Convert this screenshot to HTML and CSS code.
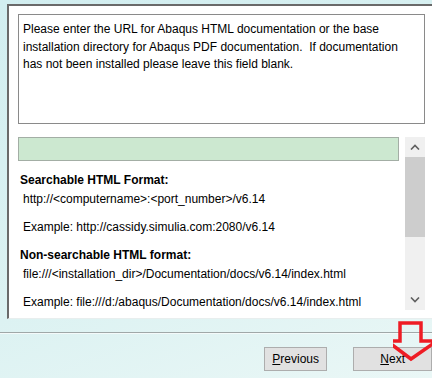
FILE: index.html
```html
<!DOCTYPE html>
<html lang="en">
<head>
<meta charset="UTF-8" />
<title>Abaqus Documentation Location</title>
<link rel="stylesheet" href="styles.css">
</head>
<body>
  <div class="panel">
    <!-- instructions box -->
    <div class="info-box">
      Please enter the URL for Abaqus HTML documentation or the base<br>
      installation directory for Abaqus PDF documentation.&nbsp; If documentation<br>
      has not been installed please leave this field blank.
    </div>

    <div class="scroll-area">
      <div class="scroll-content">
        <div class="url-field"></div>
        <div class="heading">Searchable HTML Format:</div>
        <div class="line">http://&lt;computername&gt;:&lt;port_number&gt;/v6.14</div>
        <div class="line example">Example: http://cassidy.simulia.com:2080/v6.14</div>
        <div class="heading">Non-searchable HTML format:</div>
        <div class="line">file:///&lt;installation_dir&gt;/Documentation/docs/v6.14/index.html</div>
        <div class="line example">Example: file:///d:/abaqus/Documentation/docs/v6.14/index.html</div>
      </div>
      <div class="scrollbar">
        <div class="sb-btn">
          <svg width="10" height="6" viewBox="0 0 10 6"><path d="M1 5.5 L5 1.5 L9 5.5" fill="none" stroke="#606060" stroke-width="1.6"/></svg>
        </div>
        <div class="sb-thumb"></div>
        <div class="sb-track"></div>
        <div class="sb-btn">
          <svg width="10" height="6" viewBox="0 0 10 6"><path d="M1 0.5 L5 4.5 L9 0.5" fill="none" stroke="#606060" stroke-width="1.6"/></svg>
        </div>
      </div>
    </div>
  </div>

  <div class="separator"></div>

  <div class="buttons">
    <div class="btn btn-prev"><u>P</u>revious</div>
    <div class="btn btn-next"><u>N</u>ext</div>
  </div>

  <!-- annotation arrow drawn over the Next button -->
  <svg class="red-arrow" width="48" height="42" viewBox="0 0 48 42">
    <polygon points="7,2 28,2 28,20 44,20 18,38 -6,20 7,20" fill="none" stroke="#ee1c24" stroke-width="3.5" stroke-linejoin="miter"/>
  </svg>
</body>
</html>
```

FILE: styles.css
```css
body {
  margin: 0;
  width: 432px;
  height: 378px;
  overflow: hidden;
  position: relative;
  font-family: "Liberation Sans", Arial, sans-serif;
  font-size: 12px;
  color: #000;
  background: linear-gradient(160deg, #d2eef0 0%, #dcf2f2 60%, #eaf7f6 100%);
}

.panel {
  margin: 4px 0 0 7px;
  width: 440px;
  height: 315px;
  box-sizing: border-box;
  background: #fff;
  border-top: 2px solid #6a6a6a;
  border-left: 2px solid #6a6a6a;
  border-bottom: 1px solid #e8eeee;
  padding: 8px 0 0 9px;
}

.info-box {
  width: 407px;
  height: 110px;
  box-sizing: border-box;
  border: 1px solid #8a8a8a;
  padding: 6px 0 0 4px;
  line-height: 17.5px;
}

.scroll-area {
  display: flex;
  gap: 6px;
  width: 407px;
  margin-top: 13px;
  height: 173px;
}

.scroll-content {
  width: 381px;
}

.url-field {
  height: 24px;
  box-sizing: border-box;
  background: #cce8d0;
  border: 1px solid #a3aea5;
}

.heading {
  font-weight: bold;
  line-height: 18px;
  margin-top: 10px;
  padding-left: 2px;
}

.line {
  line-height: 18px;
  padding-left: 5px;
  margin-top: 1px;
}

.line.example {
  margin-top: 10px;
}

.scrollbar {
  width: 20px;
  display: flex;
  flex-direction: column;
  background: #f0f0f0;
}

.sb-btn {
  height: 20px;
  display: flex;
  align-items: center;
  justify-content: center;
}

.sb-thumb {
  height: 80px;
  background: #cdcdcd;
}

.sb-track {
  flex: 1;
}

.separator {
  margin-top: 13px;
  height: 1px;
  background: #a0a8a8;
  border-bottom: 1px solid #f4fafa;
}

.buttons {
  display: flex;
  gap: 26px;
  margin: 13px 0 0 264px;
}

.btn {
  height: 24px;
  box-sizing: border-box;
  background: #e1e1e1;
  border: 1px solid #adadad;
  line-height: 22px;
  text-align: center;
  font-size: 12px;
}

.btn-prev {
  width: 66px;
}

.btn-next {
  width: 82px;
}

.red-arrow {
  position: absolute;
  left: 393px;
  top: 321px;
}
```
